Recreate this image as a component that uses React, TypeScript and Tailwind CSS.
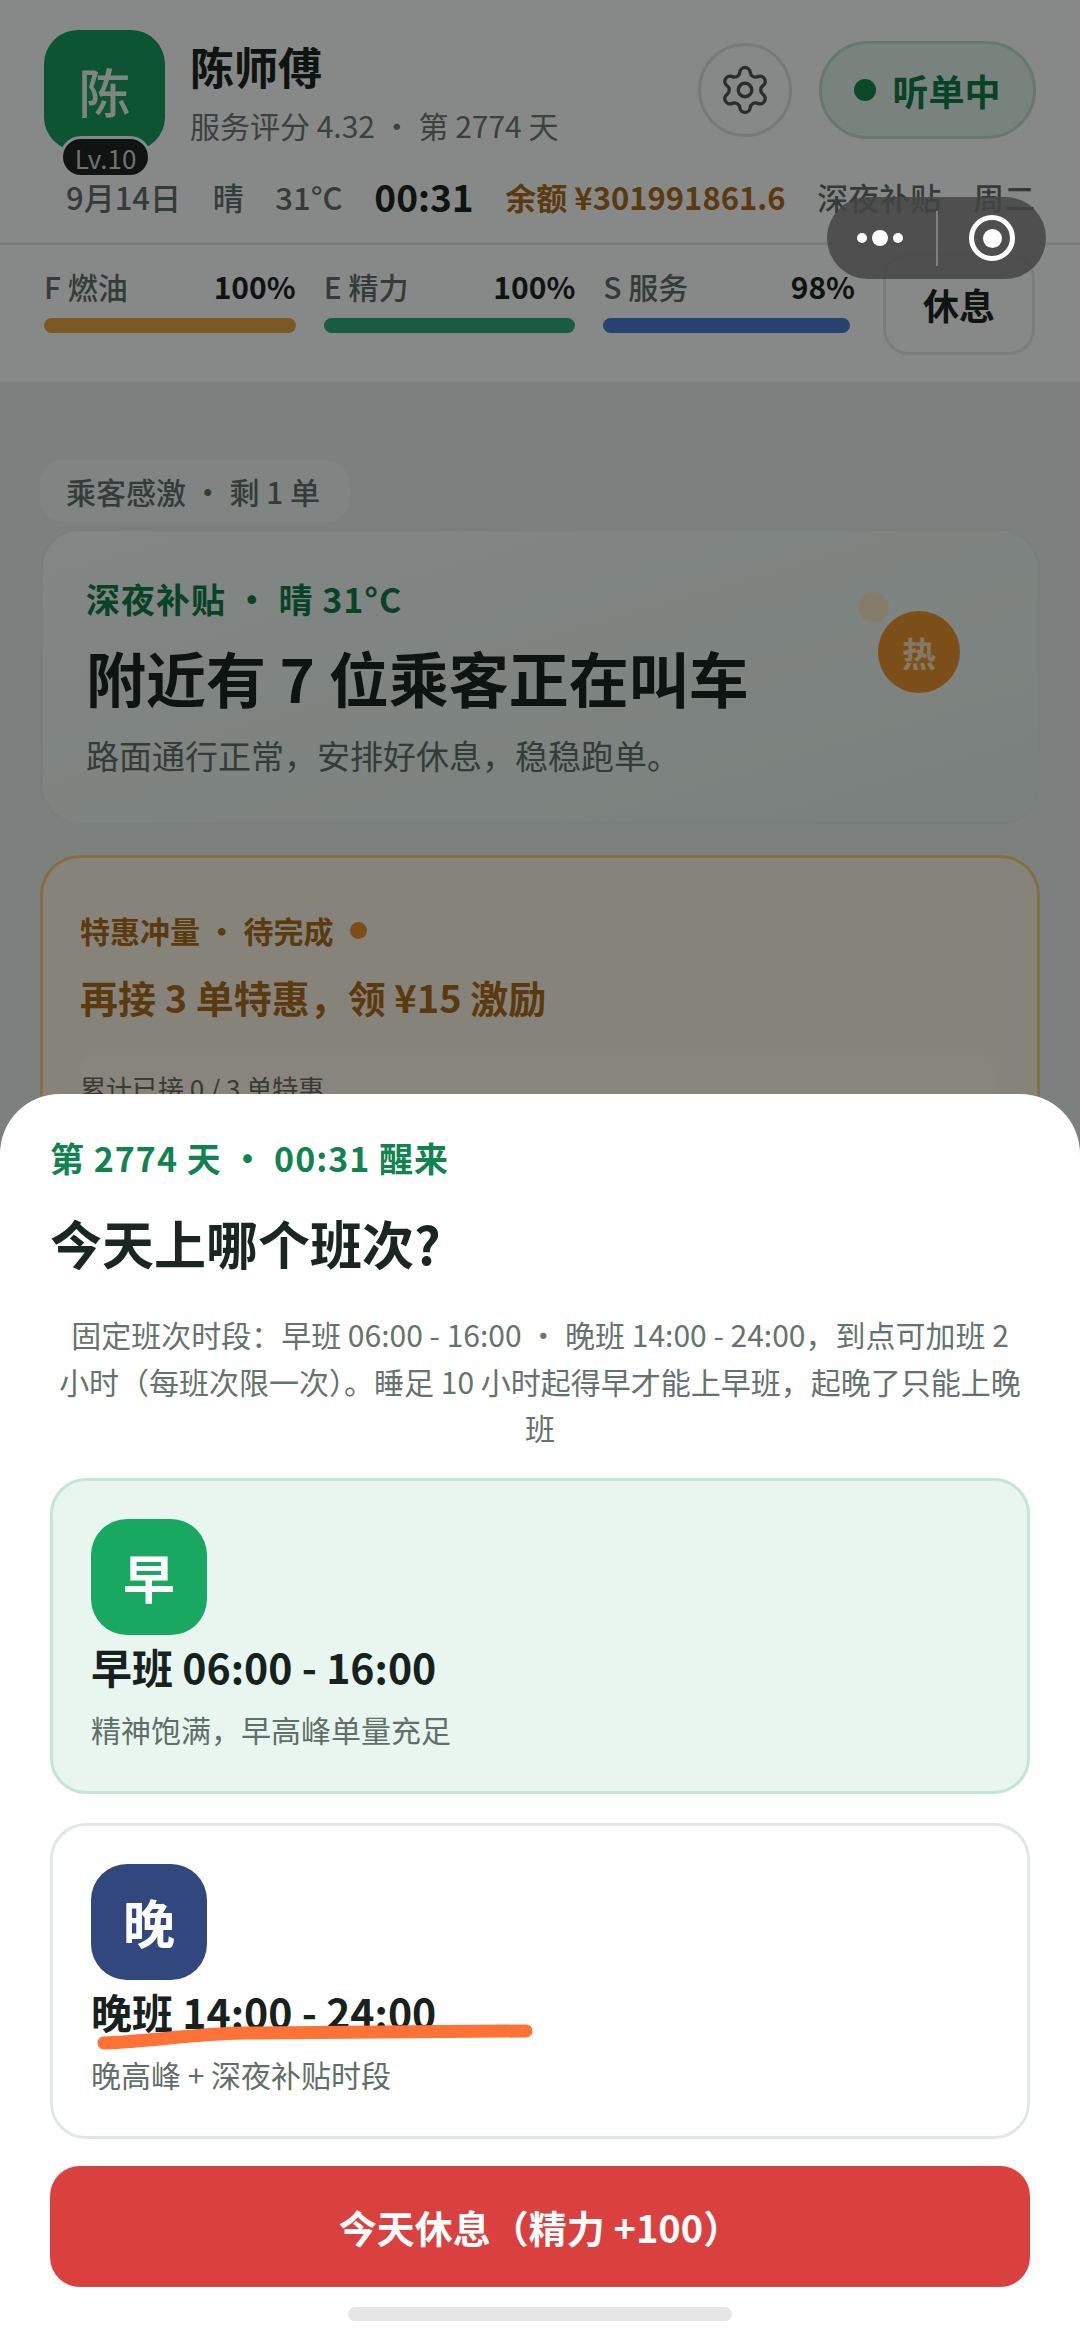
import { Settings } from "lucide-react";

const cjk = "font-['Noto_Sans_CJK_SC','Noto_Sans',sans-serif]";

function Stat({ label, value, barColor, barWidth }: { label: string; value: string; barColor: string; barWidth: string }) {
  return (
    <div className="flex-1">
      <div className="flex justify-between items-center h-[44px] text-[30px] font-medium">
        <span className="text-[#5f6d68]">{label}</span>
        <span className="font-semibold text-[#1b2522]">{value}</span>
      </div>
      <div className={`h-[15px] mt-[10px] rounded-full ${barColor} ${barWidth}`} />
    </div>
  );
}

function ShiftCard({
  glyph,
  name,
  note,
  iconColor,
  cardColor,
  children,
}: {
  glyph: string;
  name: string;
  note: string;
  iconColor: string;
  cardColor: string;
  children?: React.ReactNode;
}) {
  return (
    <div className={`relative h-[316px] rounded-[36px] border-[3px] px-[38px] pt-[38px] ${cardColor}`}>
      <div className={`w-[116px] h-[116px] rounded-[36px] flex items-center justify-center text-white text-[52px] font-bold ${iconColor}`}>
        {glyph}
      </div>
      <div className="mt-[1px] text-[41px] leading-[60px] font-bold text-[#17211e]">{name}</div>
      <div className="mt-[10px] text-[30px] leading-[46px] text-[#5f6f69]">{note}</div>
      {children}
    </div>
  );
}

export default function App() {
  return (
    <div className={`relative w-[1080px] h-[2341px] overflow-hidden bg-[#e2ece7] ${cjk}`}>
      {/* top status header */}
      <header className="h-[382px] bg-[#f5f9f7]">
        <div className="flex items-start px-[44px] pt-[30px] h-[160px]">
          <div className="relative w-[121px] h-[121px] rounded-[34px] bg-[#189a5d] flex items-center justify-center text-[#e8f2ec] text-[52px] font-medium">
            陈
            <span className="absolute left-[16px] top-[106px] w-[85px] h-[36px] rounded-full bg-[#1c2422] border-[3px] border-[#f5f9f7] box-content flex items-center justify-center text-[26px] font-normal text-[#c9d0cd]">
              Lv.10
            </span>
          </div>
          <div className="ml-[25px] pt-[6px]">
            <div className="text-[44px] leading-[60px] font-bold text-[#1b2522]">陈师傅</div>
            <div className="mt-[6px] text-[30px] leading-[46px] text-[#6a7773]">服务评分 4.32 · 第 2774 天</div>
          </div>
          <div className="ml-auto flex items-center gap-[27px] pt-[11px]">
            <div className="w-[94px] h-[94px] rounded-full border-[3px] border-[#d9dfdc] flex items-center justify-center text-[#4b5551]">
              <Settings size={54} strokeWidth={1.5} />
            </div>
            <div className="w-[217px] h-[98px] rounded-full border-[3px] border-[#b9dcc8] bg-[#dcefe4] flex items-center justify-center gap-[16px] text-[36px] font-bold text-[#127a48]">
              <span className="w-[22px] h-[22px] rounded-full bg-[#14854e]" />
              听单中
            </div>
          </div>
        </div>
        <div className="flex items-center justify-between h-[52px] mt-[11px] pl-[66px] pr-[45px] text-[31px] font-medium text-[#5f6d68]">
          <span>9月14日</span>
          <span>晴</span>
          <span>31°C</span>
          <span className="text-[37px] font-bold text-[#1b2522]">00:31</span>
          <span className="font-bold text-[#a86a1c]">余额 ¥301991861.6</span>
          <span>深夜补贴</span>
          <span>周二</span>
        </div>
        <div className="mt-[19px] h-[3px] bg-[#dfe4e2]" />
        <div className="flex items-start pl-[44px] pr-[45px] pt-[8px] gap-[28px]">
          <div className="flex flex-1 gap-[28px] pt-[11px]">
            <Stat label="F 燃油" value="100%" barColor="bg-[#e0a043]" barWidth="w-full" />
            <Stat label="E 精力" value="100%" barColor="bg-[#30a77c]" barWidth="w-full" />
            <Stat label="S 服务" value="98%" barColor="bg-[#4a7bd0]" barWidth="w-[98%]" />
          </div>
          <div className="w-[152px] h-[102px] rounded-[26px] border-[3px] border-[#dfe4e2] bg-[#f5f9f7] flex items-center justify-center text-[36px] font-bold text-[#1b2522]">
            休息
          </div>
        </div>
      </header>

      {/* trip cards under the sheet */}
      <main className="px-[40px]">
        <div className="mt-[78px] w-[310px] h-[62px] rounded-[24px] bg-[#e9f1ed] flex items-center pl-[26px] text-[30px] font-medium text-[#5f6d68]">
          乘客感激 · 剩 1 单
        </div>
        <section className="relative mt-[6px] h-[297px] rounded-[40px] border-[3px] border-[#dde8e3] bg-gradient-to-br from-[#eef6f2] to-[#dfebe5] pl-[43px] pt-[45px]">
          <div className="text-[34px] leading-[46px] font-semibold tracking-[1px] text-[#127a48]">深夜补贴 · 晴 31°C</div>
          <div className="mt-[16px] text-[60px] leading-[78px] font-bold text-[#1b2522]">附近有 7 位乘客正在叫车</div>
          <div className="mt-[14px] text-[33px] leading-[50px] text-[#5f6d68]">路面通行正常，安排好休息，稳稳跑单。</div>
          <span className="absolute left-[835px] top-[80px] w-[82px] h-[82px] rounded-full bg-[#e2912f] flex items-center justify-center text-[34px] font-bold text-[#f3dcb8]">
            热
          </span>
          <span className="absolute left-[815px] top-[61px] w-[31px] h-[31px] rounded-full bg-[#f3e3c4]" />
        </section>
        <section className="mt-[30px] h-[400px] rounded-[40px] border-[3px] border-[#f5c97a] bg-[#f5eee0] pl-[37px] pt-[49px]">
          <div className="flex items-center text-[30px] leading-[46px] font-bold text-[#a86a1c]">
            特惠冲量 · 待完成
            <span className="ml-[16px] w-[17px] h-[17px] rounded-full bg-[#e2912f]" />
          </div>
          <div className="mt-[16px] text-[38px] leading-[56px] font-bold text-[#a86a1c]">再接 3 单特惠，领 ¥15 激励</div>
          <div className="mt-[30px] mr-[40px] h-[120px] rounded-t-[16px] bg-[#f7f1e5] pt-[12px] text-[26px] leading-[42px] text-[#6b6a60]">
            累计已接 0 / 3 单特惠
          </div>
        </section>
      </main>

      {/* scrim behind the shift picker */}
      <div className="absolute inset-0 bg-black/45" />

      {/* mini program capsule */}
      <div className="absolute left-[827px] top-[197px] w-[219px] h-[82px] rounded-full bg-[#444544]/85 flex items-center">
        <div className="w-[109px] flex items-center justify-center gap-[5px] pr-[4px]">
          <span className="w-[10px] h-[10px] rounded-full bg-white" />
          <span className="w-[16px] h-[16px] rounded-full bg-white" />
          <span className="w-[10px] h-[10px] rounded-full bg-white" />
        </div>
        <div className="w-[2px] h-[55px] bg-[#7e7f7e]" />
        <div className="flex-1 flex items-center justify-center">
          <span className="w-[46px] h-[46px] rounded-full border-[5px] border-white flex items-center justify-center">
            <span className="w-[19px] h-[19px] rounded-full bg-white" />
          </span>
        </div>
      </div>

      {/* shift picker sheet */}
      <div className="absolute left-0 right-0 bottom-0 h-[1247px] rounded-t-[60px] bg-white px-[50px] pt-[40px]">
        <div className="text-[34px] leading-[48px] font-bold tracking-[1px] text-[#12824f]">第 2774 天 · 00:31 醒来</div>
        <div className="mt-[26px] text-[52px] leading-[70px] font-bold text-[#1b2522]">今天上哪个班次?</div>
        <p className="mt-[33px] px-[8px] text-center text-[30px] leading-[46.5px] text-[#65736e]">
          固定班次时段：早班 06:00 - 16:00 · 晚班 14:00 - 24:00，到点可加班 2 小时（每班次限一次）。睡足 10 小时起得早才能上早班，起晚了只能上晚班
        </p>
        <div className="mt-[27px] flex flex-col gap-[29px]">
          <ShiftCard
            glyph="早"
            name="早班 06:00 - 16:00"
            note="精神饱满，早高峰单量充足"
            iconColor="bg-[#18a862]"
            cardColor="bg-[#e8f6ef] border-[#c3e6d5]"
          />
          <ShiftCard
            glyph="晚"
            name="晚班 14:00 - 24:00"
            note="晚高峰 + 深夜补贴时段"
            iconColor="bg-[#33477f]"
            cardColor="bg-white border-[#dfe8e4]"
          >
            {/* hand-drawn marker stroke */}
            <svg className="absolute left-[40px] top-[195px]" width="450" height="32" viewBox="0 0 450 32" fill="none">
              <path d="M11 22 C60 20 100 13 150 12 L433 10" stroke="#ff7236" strokeWidth="13" strokeLinecap="round" />
            </svg>
          </ShiftCard>
        </div>
        <button className="mt-[27px] w-full h-[121px] rounded-[30px] bg-[#d9403e] text-white text-[38px] font-bold">
          今天休息（精力 +100）
        </button>
        <div className="mx-auto mt-[20px] w-[384px] h-[14px] rounded-full bg-[#e6e6e6]" />
      </div>
    </div>
  );
}
